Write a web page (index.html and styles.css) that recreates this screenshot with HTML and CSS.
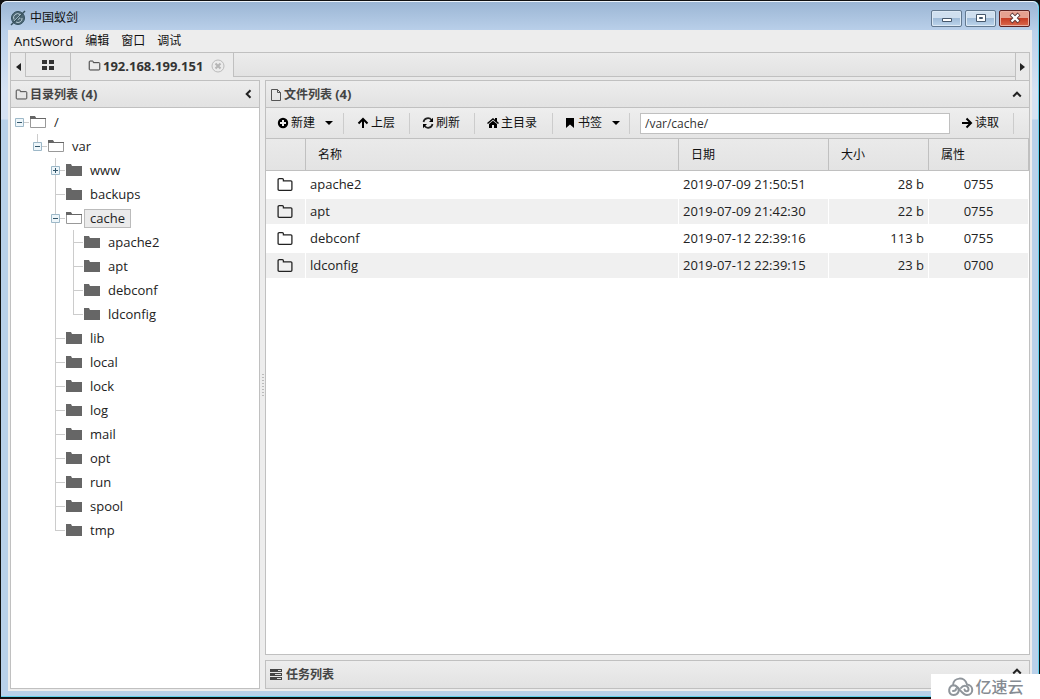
FILE: index.html
```html
<!DOCTYPE html>
<html lang="zh-CN">
<head>
<meta charset="utf-8">
<title>中国蚁剑</title>
<link rel="stylesheet" href="styles.css">
</head>
<body>
<svg class="defs" width="0" height="0" aria-hidden="true">
  <symbol id="folder-o" viewBox="0 0 16 16"><path d="M1.500 12.500V3.500Q1.500 2.500 2.500 2.500H5.500Q6.500 2.500 6.500 3.500V4.500H13.500Q14.500 4.500 14.500 5.500V12.500Q14.500 13.500 13.500 13.500H2.500Q1.500 13.500 1.500 12.500Z" fill="none" stroke="currentColor" stroke-width="1.200"/></symbol>
  <symbol id="closed" viewBox="0 0 18 14"><path d="M1 1h5l1 2h10v10H1z" fill="#666"/></symbol>
  <symbol id="open" viewBox="0 0 18 14"><path d="M1.500 12.500V2.500h5l1 1h9v9z" fill="#fff" stroke="#999"/><path d="M1 1h5l1 2h10v1H1z" fill="#666"/></symbol>
  <symbol id="minus" viewBox="0 0 9 9"><path d="M.5.5h8v8h-8z" fill="#eef6fa" stroke="#9db8c8"/><path d="M2 4.500h5" stroke="#33566b"/></symbol>
  <symbol id="plus" viewBox="0 0 9 9"><path d="M.5.5h8v8h-8z" fill="#eef6fa" stroke="#9db8c8"/><path d="M2 4.500h5M4.500 2v5" stroke="#33566b"/></symbol>
  <symbol id="up" viewBox="0 0 10 8"><path d="M1.200 6.500L5 2.700 8.800 6.500" fill="none" stroke="#222" stroke-width="2"/></symbol>
</svg>
<div class="window">
  <header class="titlebar">
    <svg width="16" height="16" viewBox="0 0 16 16"><circle cx="8" cy="8" r="6.500" fill="#4c6673" stroke="#34505e"/><path d="M4 9.500a4 4 0 0 1 6-5M6 12a4 4 0 0 0 6-4M8 10l1-4 1 3" fill="none" stroke="#b9cdd6"/><path d="M1 15L15 1" stroke="#36505d" stroke-width="1.500"/><path d="M4 11l7-7" stroke="#9fb7c1"/></svg>
    <h1>中国蚁剑</h1>
    <button class="win" aria-label="最小化"><svg width="14" height="12"><path d="M2.500 6.500h9v3h-9z" fill="#fff" stroke="#46586c"/></svg></button>
    <button class="win" aria-label="最大化"><svg width="14" height="12"><path d="M2.500 2.500h9v7h-9z" fill="#fff" stroke="#46586c"/><path d="M5.500 5.500h3v1h-3z" fill="#8ba9c7" stroke="#46586c"/></svg></button>
    <button class="win close" aria-label="关闭"><svg width="14" height="12"><path d="M3 2l8 8M11 2l-8 8" stroke="#5b3435" stroke-width="4"/><path d="M3.500 2.500l7 7M10.500 2.500l-7 7" stroke="#fff" stroke-width="2.400"/></svg></button>
  </header>
  <div class="client">
    <nav class="menu"><button>AntSword</button><button>编辑</button><button>窗口</button><button>调试</button></nav>
    <div class="tabs">
      <button class="arrow" aria-label="上一个"><svg width="5" height="8"><path d="M5 0v8L0 4z" fill="#222"/></svg></button>
      <button class="tab home" aria-label="主页"><svg width="12" height="10"><path d="M0 0h5v4H0zM7 0h5v4H7zM0 6h5v4H0zM7 6h5v4H7z" fill="#333"/></svg></button>
      <div class="tab active"><svg width="13" height="13"><use href="#folder-o"/></svg><span>192.168.199.151</span><button class="shut" aria-label="关闭标签"><svg width="14" height="14"><circle cx="7" cy="7" r="6" fill="none" stroke="#bbb"/><path d="M4.500 4.500l5 5M9.500 4.500l-5 5" stroke="#b5b5b5" stroke-width="2"/></svg></button></div>
      <div class="rest"></div>
      <button class="arrow next" aria-label="下一个"><svg width="5" height="8"><path d="M0 0v8l5-4z" fill="#222"/></svg></button>
    </div>
    <main class="panes">
      <section class="side">
        <header class="head"><svg width="13" height="13"><use href="#folder-o"/></svg><h2>目录列表 <span>(4)</span></h2><button aria-label="折叠"><svg width="8" height="10"><path d="M6.500 1.200L2.700 5l3.800 3.800" fill="none" stroke="#222" stroke-width="2"/></svg></button></header>
        <ul class="tree">
          <li><div class="node"><svg class="tog"><use href="#minus"/></svg><svg class="fold"><use href="#open"/></svg><span>/</span></div>
            <ul><li><div class="node"><svg class="tog"><use href="#minus"/></svg><svg class="fold"><use href="#open"/></svg><span>var</span></div>
              <ul>
                <li><div class="node"><svg class="tog"><use href="#plus"/></svg><svg class="fold"><use href="#closed"/></svg><span>www</span></div></li>
                <li><div class="node leaf"><svg class="fold"><use href="#closed"/></svg><span>backups</span></div></li>
                <li><div class="node"><svg class="tog"><use href="#minus"/></svg><svg class="fold"><use href="#open"/></svg><span class="selected">cache</span></div>
                  <ul>
                    <li><div class="node leaf"><svg class="fold"><use href="#closed"/></svg><span>apache2</span></div></li>
                    <li><div class="node leaf"><svg class="fold"><use href="#closed"/></svg><span>apt</span></div></li>
                    <li><div class="node leaf"><svg class="fold"><use href="#closed"/></svg><span>debconf</span></div></li>
                    <li><div class="node leaf"><svg class="fold"><use href="#closed"/></svg><span>ldconfig</span></div></li>
                  </ul></li>
                <li><div class="node leaf"><svg class="fold"><use href="#closed"/></svg><span>lib</span></div></li>
                <li><div class="node leaf"><svg class="fold"><use href="#closed"/></svg><span>local</span></div></li>
                <li><div class="node leaf"><svg class="fold"><use href="#closed"/></svg><span>lock</span></div></li>
                <li><div class="node leaf"><svg class="fold"><use href="#closed"/></svg><span>log</span></div></li>
                <li><div class="node leaf"><svg class="fold"><use href="#closed"/></svg><span>mail</span></div></li>
                <li><div class="node leaf"><svg class="fold"><use href="#closed"/></svg><span>opt</span></div></li>
                <li><div class="node leaf"><svg class="fold"><use href="#closed"/></svg><span>run</span></div></li>
                <li><div class="node leaf"><svg class="fold"><use href="#closed"/></svg><span>spool</span></div></li>
                <li><div class="node leaf"><svg class="fold"><use href="#closed"/></svg><span>tmp</span></div></li>
              </ul></li></ul></li>
        </ul>
      </section>
      <div class="splitter"></div>
      <div class="right">
        <section class="files">
          <header class="head"><svg width="12" height="13"><path d="M1.500 1.500h6l3 3v8h-9zM7.500 1.500v3h3" fill="none" stroke="#555"/></svg><h2>文件列表 <span>(4)</span></h2><button aria-label="折叠"><svg width="10" height="8"><use href="#up"/></svg></button></header>
          <div class="toolbar">
            <button class="drop new"><svg width="12" height="12"><circle cx="6" cy="6" r="5.200"/><path d="M6 3v6M3 6h6" stroke="#eee" stroke-width="2"/></svg>新建<svg class="caret" width="8" height="4"><path d="M0 0h8L4 4z"/></svg></button>
            <button class="parent"><svg width="12" height="12"><path d="M6 11V2M1.500 6.500L6 2l4.500 4.500" fill="none" stroke="#000" stroke-width="2"/></svg>上层</button>
            <button class="reload"><svg width="12" height="12"><path d="M1.500 5A4.500 4.500 0 0 1 9.500 3M10.500 7A4.500 4.500 0 0 1 2.500 9" fill="none" stroke="#222" stroke-width="1.700"/><path d="M11 .8V5H7zM1 11.200V7h4z"/></svg>刷新</button>
            <button class="root"><svg width="12" height="12"><path d="M0 6l6-5 2 1.700V1h2v3.300L12 6l-1 1-5-4.200L1 7zM2 7l4-3.200L10 7v4H7V8H5v3H2z"/></svg>主目录</button>
            <button class="drop marks"><svg width="12" height="12"><path d="M2 1h8v10L6 7.500 2 11z"/></svg>书签<svg class="caret" width="8" height="4"><path d="M0 0h8L4 4z"/></svg></button>
            <input type="text" value="/var/cache/" aria-label="路径">
            <button class="read"><svg width="12" height="12"><path d="M1 6h9M5.500 1.500L10 6l-4.500 4.500" fill="none" stroke="#000" stroke-width="2"/></svg>读取</button>
          </div>
          <table>
            <colgroup><col class="c-icon"><col><col class="c-date"><col class="c-size"><col class="c-attr"></colgroup>
            <thead><tr><th></th><th>名称</th><th>日期</th><th>大小</th><th>属性</th></tr></thead>
            <tbody>
              <tr><td><svg width="18" height="17"><use href="#folder-o"/></svg></td><td>apache2</td><td>2019-07-09 21:50:51</td><td>28 b</td><td>0755</td></tr>
              <tr><td><svg width="18" height="17"><use href="#folder-o"/></svg></td><td>apt</td><td>2019-07-09 21:42:30</td><td>22 b</td><td>0755</td></tr>
              <tr><td><svg width="18" height="17"><use href="#folder-o"/></svg></td><td>debconf</td><td>2019-07-12 22:39:16</td><td>113 b</td><td>0755</td></tr>
              <tr><td><svg width="18" height="17"><use href="#folder-o"/></svg></td><td>ldconfig</td><td>2019-07-12 22:39:15</td><td>23 b</td><td>0700</td></tr>
            </tbody>
          </table>
        </section>
        <section class="tasks"><header class="head"><svg width="12" height="11"><path d="M0 0h12v3H0zM0 4h12v3H0zM0 8h12v3H0z" fill="#444"/><path d="M8 1.500h3M5 5.500h6M7 9.500h4" stroke="#ddd"/></svg><h2>任务列表</h2><button aria-label="展开"><svg width="10" height="8"><use href="#up"/></svg></button></header></section>
      </div>
    </main>
  </div>
</div>
<div class="brand"><svg width="27" height="20" viewBox="0 0 27 20"><g fill="none" stroke="#8f959b" stroke-width="2" stroke-linecap="round"><path d="M6 8.500C6 0 18-1 20 7.500c7 .5 7 10.500 0 10.500-5 0-8-8-12-9.500C1 7 0 18 6.500 18c5 0 7-6 3.500-7.500"/><path d="M6 14c2 0 3-1 3-2M14 11c2-3 7-3 7.500 1 0 3-3.500 3-4 .5"/></g></svg><span>亿速云</span></div>
</body>
</html>
```
FILE: styles.css
```css
* { box-sizing: border-box; }
body {
  margin: 0;
  height: 100vh;
  padding: 1px 1px 2px;
  overflow: hidden;
  background: #111;
  color: #222;
  font: 13px/18px "Open Sans", "Noto Sans CJK SC", sans-serif;
}
button { margin: 0; padding: 0; border: 0; background: none; color: #111; font: inherit; }
svg { display: block; flex: none; }
.defs { position: absolute; }
h1, h2, ul { margin: 0; padding: 0; }
.window {
  height: 100%;
  display: flex;
  flex-direction: column;
  padding: 0 6px 5px 7px;
  border: solid #63d2ee;
  border-width: 0 1px 1px 0;
  border-radius: 6px 6px 0 0;
  background: linear-gradient(#9ab5d3, #bad0ea 30px, #d6e2f3 90px, #d6e2f3 118px, #b9d1ea 119px);
  box-shadow: inset 0 1px #edf4fa;
}
.titlebar { height: 29px; display: flex; align-items: center; gap: 3px; padding: 5px 2px 0; }
.titlebar h1 { flex: 1; padding-left: 1px; font-size: 12px; font-weight: 400; color: #111; }
.win {
  width: 31px;
  height: 17px;
  display: grid;
  place-items: center;
  border: 1px solid #62788f;
  border-radius: 2px;
  background: linear-gradient(#cfdfef 45%, #9db9d6 46%, #bdd5ec);
  box-shadow: inset 0 0 0 1px #dce9f5;
}
.close { border-color: #5d2222; background: linear-gradient(#e5a090 45%, #c53a22 46%, #d9694e); box-shadow: inset 0 0 0 1px #eab0a4; }
.client { flex: 1; min-height: 0; display: flex; flex-direction: column; padding: 0 2px 2px; background: #ededed; }
.menu { height: 22px; display: flex; align-items: center; gap: 12px; padding-left: 4px; font-size: 12px; }
.menu button:first-child { font-size: 13px; }
.tabs { height: 28px; display: flex; border: 1px solid #c0c0c0; border-bottom: 0; background: #e9e9e9; }
.arrow { width: 14px; display: grid; place-items: center; }
.tab { border-left: 1px solid #c0c0c0; display: flex; align-items: center; }
.home, .rest { height: 24px; border-bottom: 1px solid #c0c0c0; }
.home { width: 45px; justify-content: center; }
.active { width: 163px; gap: 2px; padding: 0 0 2px 17px; font-weight: 700; color: #333; background: #ebebeb; }
.shut { margin-left: 6px; }
.rest { flex: 1; border-left: 1px solid #c0c0c0; background: linear-gradient(#ececec, #e2e2e2); }
.next { border-left: 1px solid #c0c0c0; }
.panes { flex: 1; min-height: 0; display: flex; }
.side { width: 250px; display: flex; flex-direction: column; border: 1px solid #c0c0c0; background: #fff; }
.head {
  height: 27px;
  display: flex;
  align-items: center;
  gap: 2px;
  padding: 0 7px 0 4px;
  border-bottom: 1px solid #c0c0c0;
  background: linear-gradient(#ededed, #e2e2e2);
  color: #444;
}
.head h2 { flex: 1; font-size: 12px; line-height: 18px; font-weight: 700; }
.head h2 span { font-size: 13px; }
.splitter { width: 5px; background: repeating-linear-gradient(#bbb 0 1px, transparent 1px 3px) center / 2px 22px no-repeat, #ededed; }
.tree { padding-top: 2px; list-style: none; }
.tree ul { margin-left: 18px; list-style: none; }
.tree li { background: linear-gradient(#ccc, #ccc) 8px 12px / 10px 1px no-repeat; }
.tree ul > li { background: linear-gradient(#ccc, #ccc) 8px 12px / 10px 1px no-repeat, linear-gradient(#ccc, #ccc) 8px 0 / 1px 100% no-repeat; }
.tree ul > li:last-child { background-size: 10px 1px, 1px 12px; }
.node { height: 24px; display: flex; align-items: center; }
.leaf { padding-left: 18px; }
.tog { width: 9px; height: 9px; margin: 0 5px 0 4px; }
.fold { width: 18px; height: 14px; margin-right: 1px; }
.node span { padding: 0 5px; border: 1px solid transparent; line-height: 17px; }
.node .selected { border-color: #bbb; background: #ebebeb; }
.right { flex: 1; min-width: 0; display: flex; flex-direction: column; }
.files { flex: 1; border: 1px solid #c0c0c0; background: #fff; }
.toolbar { height: 31px; display: flex; align-items: center; border-bottom: 1px solid #c0c0c0; background: linear-gradient(#eee, #e4e4e4); font-size: 12px; }
.toolbar button { height: 21px; display: flex; align-items: center; gap: 2px; border-right: 1px solid #ccc; }
.toolbar .caret { margin-left: 8px; }
.new { width: 78px; padding-left: 11px; }
.parent { width: 66px; padding-left: 13px; }
.reload { width: 65px; padding-left: 12px; }
.root { width: 78px; padding-left: 12px; }
.marks { width: 77px; padding-left: 11px; }
.toolbar input { flex: 1; min-width: 0; height: 21px; margin-left: 10px; padding: 0 4px; border: 1px solid #c0c0c0; background: #fff; color: #333; font: 12px "Open Sans", sans-serif; }
.read { width: 64px; margin-right: 15px; padding-left: 11px; }
table { width: 100%; table-layout: fixed; border-collapse: separate; border-spacing: 0; }
.c-icon { width: 40px; }
.c-date { width: 150px; }
.c-size, .c-attr { width: 100px; }
th { height: 32px; padding: 0 12px; border-right: 1px solid #c0c0c0; border-bottom: 1px solid #c0c0c0; background: linear-gradient(#eaeaea, #e3e3e3); font-size: 12px; font-weight: 400; text-align: left; color: #111; }
td { height: 27px; padding: 0 4px 1px; border: solid #fff; border-width: 1px 1px 1px 0; }
td:first-child { padding-left: 10px; color: #222; }
td:nth-child(4) { text-align: right; }
td:nth-child(5) { text-align: center; }
tbody tr:nth-child(even) { background: #f0f0f0; }
.tasks { margin-top: 5px; border: 1px solid #c0c0c0; }
.tasks .head { border-bottom: 0; gap: 4px; }
.tasks .head button { align-self: flex-start; padding-top: 6px; }
.brand { position: absolute; right: 0; bottom: 0; width: 109px; height: 25px; display: flex; align-items: center; justify-content: center; gap: 1px; background: #fff; color: #858b92; font-size: 16px; font-weight: 500; }
```
